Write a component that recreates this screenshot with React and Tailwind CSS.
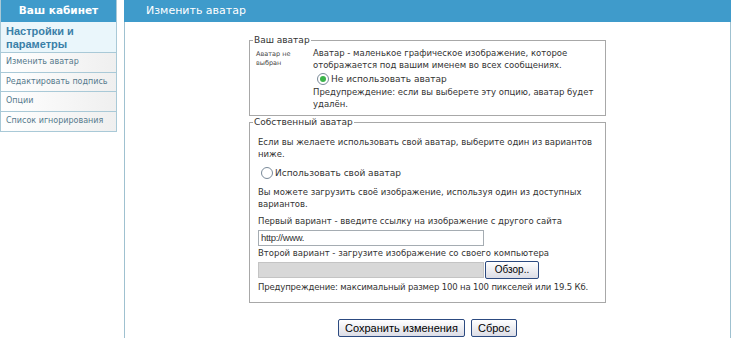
import React from 'react';

const menu = ['Изменить аватар', 'Редактировать подпись', 'Опции', 'Список игнорирования'];

function Radio({ checked }) {
  return (
    <span className="inline-flex w-[12px] h-[12px] rounded-full border border-[#7a8a99] bg-white items-center justify-center mr-[2px]">
      {checked && <span className="w-[6px] h-[6px] rounded-full bg-[#3cb44b]" />}
    </span>
  );
}

const btn = 'h-[18px] px-[6px] border border-[#2c4a80] rounded-[2px] bg-gradient-to-b from-white to-[#dcdde6] flex items-center';

export default function App() {
  return (
    <div className="flex w-[732px] h-[338px] bg-white overflow-hidden text-[#333]" style={{ fontFamily: '"DejaVu Sans", Verdana, sans-serif' }}>
      {/* sidebar */}
      <div className="w-[117px] flex-shrink-0">
        <div className="border border-[#a9c9d7] border-t-0">
          <div className="h-[22px] bg-[#3f9bcb] text-white text-[10.5px] font-bold flex items-center justify-center">
            Ваш кабинет
          </div>
          <div
            className="h-[31px] bg-[#eaf6fb] text-[#3a80a8] text-[11px] font-bold leading-[13px] px-[5px] pt-[3px] border-b border-[#a9c9d7]"
            style={{ fontFamily: '"Liberation Sans", Arial, sans-serif' }}
          >
            Настройки и параметры
          </div>
          {menu.map((m, i) => (
            <div
              key={m}
              className={`h-[19.5px] flex items-center px-[5px] text-[8px] text-[#55798c] bg-gradient-to-r from-white to-[#efefef] ${i < menu.length - 1 ? 'border-b border-[#a9c9d7]' : ''}`}
            >
              {m}
            </div>
          ))}
        </div>
      </div>

      {/* main */}
      <div className="ml-[7px] w-[607px] flex flex-col border-x border-[#9fc1d0]">
        <div className="h-[22px] bg-[#3f9bcb] text-white text-[11px] flex items-center pl-[22px] -mx-px">
          Изменить аватар
        </div>

        <div className="flex flex-col items-center pt-[13px] text-[8.5px] leading-[12px]">
          <fieldset className="w-[357px] border border-[#a8a8a8] px-[6px] pb-[5px]">
            <legend className="px-[1px] text-[9px] leading-[10px] ml-[-3px]">Ваш аватар</legend>
            <div className="flex mt-[2px]">
              <div className="w-[57px] text-[6.5px] leading-[9px] pt-[3px] flex-shrink-0 text-[#444]">Аватар не выбран</div>
              <div>
                <p>Аватар - маленькое графическое изображение, которое отображается под вашим именем во всех сообщениях.</p>
                <div className="flex items-center mt-[2px] mb-[1px] ml-[4px]">
                  <Radio checked />
                  <span className="text-[9px]">Не использовать аватар</span>
                </div>
                <p>Предупреждение: если вы выберете эту опцию, аватар будет удалён.</p>
              </div>
            </div>
          </fieldset>

          <fieldset className="w-[357px] border border-[#a8a8a8] pl-[8px] pr-[5px] pb-[9px] mt-[1px]">
            <legend className="px-[1px] text-[9px] leading-[10px] ml-[-5px]">Собственный аватар</legend>
            <p className="mt-[9px]">Если вы желаете использовать свой аватар, выберите один из вариантов ниже.</p>
            <div className="flex items-center mt-[7px] ml-[3px]">
              <Radio />
              <span className="text-[9px]">Использовать свой аватар</span>
            </div>
            <p className="mt-[7px] pr-[3px]">Вы можете загрузить своё изображение, используя один из доступных вариантов.</p>
            <p className="mt-[5px]">Первый вариант - введите ссылку на изображение с другого сайта</p>
            <div className="mt-[3px] w-[226px] h-[16px] border border-[#a5acb2] bg-white flex items-center px-[2px] text-[9.5px] tracking-[-0.3px]" style={{ fontFamily: '"Liberation Sans", Arial, sans-serif' }}>
              http://www.
            </div>
            <p className="mt-[1px]">Второй вариант - загрузите изображение со своего компьютера</p>
            <div className="flex mt-[2px] items-center">
              <div className="w-[226px] h-[16px] bg-[#d8d8d8] border border-[#c4c4c4]" />
              <div className={`${btn} w-[54px] ml-[1px] justify-center text-[10px] text-black`} style={{ fontFamily: '"Liberation Sans", Arial, sans-serif' }}>
                Обзор..
              </div>
            </div>
            <p className="mt-[2px] whitespace-nowrap tracking-[-0.15px]">Предупреждение: максимальный размер 100 на 100 пикселей или 19.5 Кб.</p>
          </fieldset>

          <div className="flex gap-[6px] mt-[16px] text-[11px] text-black" style={{ fontFamily: '"Liberation Sans", Arial, sans-serif' }}>
            <div className={btn}>Сохранить изменения</div>
            <div className={btn}>Сброс</div>
          </div>
        </div>
      </div>
    </div>
  );
}
